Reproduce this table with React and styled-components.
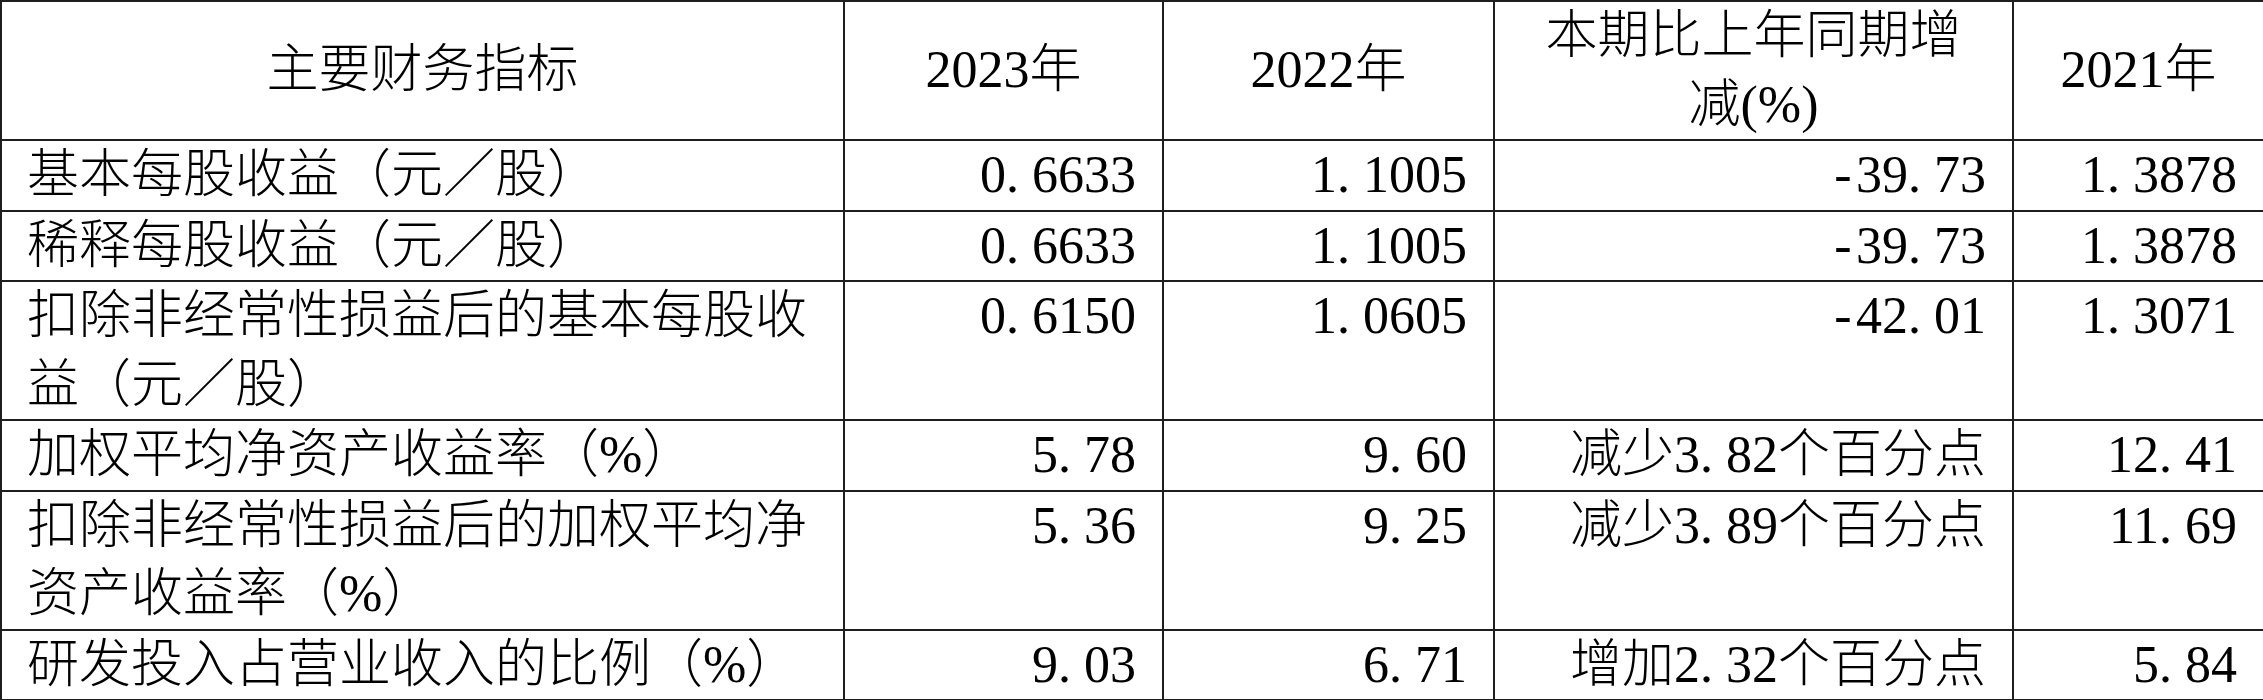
import React from 'react';
import styled, { createGlobalStyle } from 'styled-components';

const GlobalStyle = createGlobalStyle`
  html, body {
    margin: 0;
    padding: 0;
    background: #ffffff;
  }
`;

const Table = styled.table`
  width: 2263px;
  table-layout: fixed;
  border-collapse: collapse;
  font-family: "Liberation Serif", "Noto Sans CJK SC", serif;
  font-size: 52px;
  font-weight: 300;
  line-height: 68.5px;
  color: #000;
`;

const HeadCell = styled.th`
  border: 2px solid #1e1e1e;
  padding: 0 26px;
  font-weight: 300;
  text-align: center;
  vertical-align: middle;
`;

const LabelCell = styled.td`
  border: 2px solid #1e1e1e;
  padding: 0 26px 0 25px;
  text-align: left;
  vertical-align: top;
`;

const ValueCell = styled.td`
  border: 2px solid #1e1e1e;
  padding: 0 26px 0 10px;
  text-align: right;
  vertical-align: top;
  white-space: nowrap;
`;

// half-width cell for punctuation, like the report's fixed-pitch font
const Half = styled.span`
  display: inline-block;
  width: 0.5em;
  text-align: ${(p) => p.$align || 'center'};
`;

function Txt({ children }) {
  const parts = [];
  let buf = '';
  const flush = () => {
    if (buf) parts.push(buf);
    buf = '';
  };
  for (const ch of children) {
    if (ch === '.') {
      flush();
      parts.push(<Half key={parts.length} $align="left">.</Half>);
    } else if (ch === '-') {
      flush();
      parts.push(<Half key={parts.length}>-</Half>);
    } else {
      buf += ch;
    }
  }
  flush();
  return <>{parts}</>;
}

const rows = [
  ['基本每股收益（元／股）', '0.6633', '1.1005', '-39.73', '1.3878'],
  ['稀释每股收益（元／股）', '0.6633', '1.1005', '-39.73', '1.3878'],
  ['扣除非经常性损益后的基本每股收益（元／股）', '0.6150', '1.0605', '-42.01', '1.3071'],
  ['加权平均净资产收益率（%）', '5.78', '9.60', '减少3.82个百分点', '12.41'],
  ['扣除非经常性损益后的加权平均净资产收益率（%）', '5.36', '9.25', '减少3.89个百分点', '11.69'],
  ['研发投入占营业收入的比例（%）', '9.03', '6.71', '增加2.32个百分点', '5.84'],
];

export default function App() {
  return (
    <>
      <GlobalStyle />
      <Table>
        <colgroup>
          <col style={{ width: 843 }} />
          <col style={{ width: 319 }} />
          <col style={{ width: 331 }} />
          <col style={{ width: 519 }} />
          <col style={{ width: 251 }} />
        </colgroup>
        <thead>
          <tr>
            <HeadCell>主要财务指标</HeadCell>
            <HeadCell><Txt>2023年</Txt></HeadCell>
            <HeadCell><Txt>2022年</Txt></HeadCell>
            <HeadCell>本期比上年同期增减(%)</HeadCell>
            <HeadCell><Txt>2021年</Txt></HeadCell>
          </tr>
        </thead>
        <tbody>
          {rows.map((r) => (
            <tr key={r[0]}>
              <LabelCell><Txt>{r[0]}</Txt></LabelCell>
              {r.slice(1).map((v, i) => (
                <ValueCell key={i}><Txt>{v}</Txt></ValueCell>
              ))}
            </tr>
          ))}
        </tbody>
      </Table>
    </>
  );
}
